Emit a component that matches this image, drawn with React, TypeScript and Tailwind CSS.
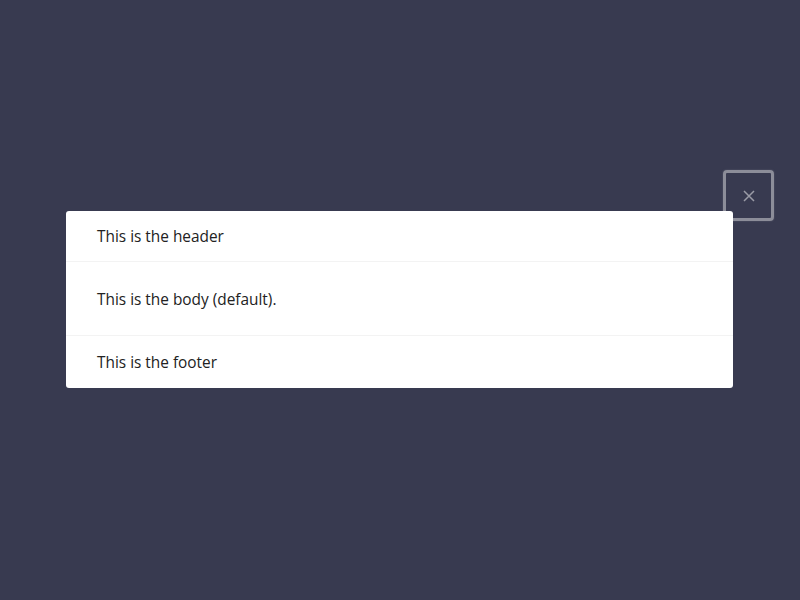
import React from "react";

const App = () => {
  return (
    <div
      className="relative flex h-[600px] w-[800px] items-center justify-center bg-[#383a50] pb-[1px] pr-[1px]"
      style={{ fontFamily: '"Open Sans", sans-serif' }}
    >
      <button className="absolute left-[723px] top-[170px] flex h-[51px] w-[51px] items-center justify-center rounded-[4px] border-[3px] border-[#8c8d99] shadow-[0_0_2px_#85869380]">
        <svg width="12" height="12" viewBox="0 0 12 12" fill="none" stroke="#9a9ba6" strokeWidth="1.5">
          <path d="M1 1L11 11M11 1L1 11" />
        </svg>
      </button>

      <div className="relative w-[667px] rounded-[3px] bg-white text-[15.4px] text-[#222]">
        <div className="flex h-[51px] items-center border-b border-[#f3f3f3] px-[31px] pt-[2px]">
          This is the header
        </div>
        <div className="flex h-[74px] items-center border-b border-[#f3f3f3] px-[31px] pt-[2px]">
          This is the body (default).
        </div>
        <div className="flex h-[52px] items-center px-[31px] pt-[2px]">This is the footer</div>
      </div>
    </div>
  );
};

export default App;
